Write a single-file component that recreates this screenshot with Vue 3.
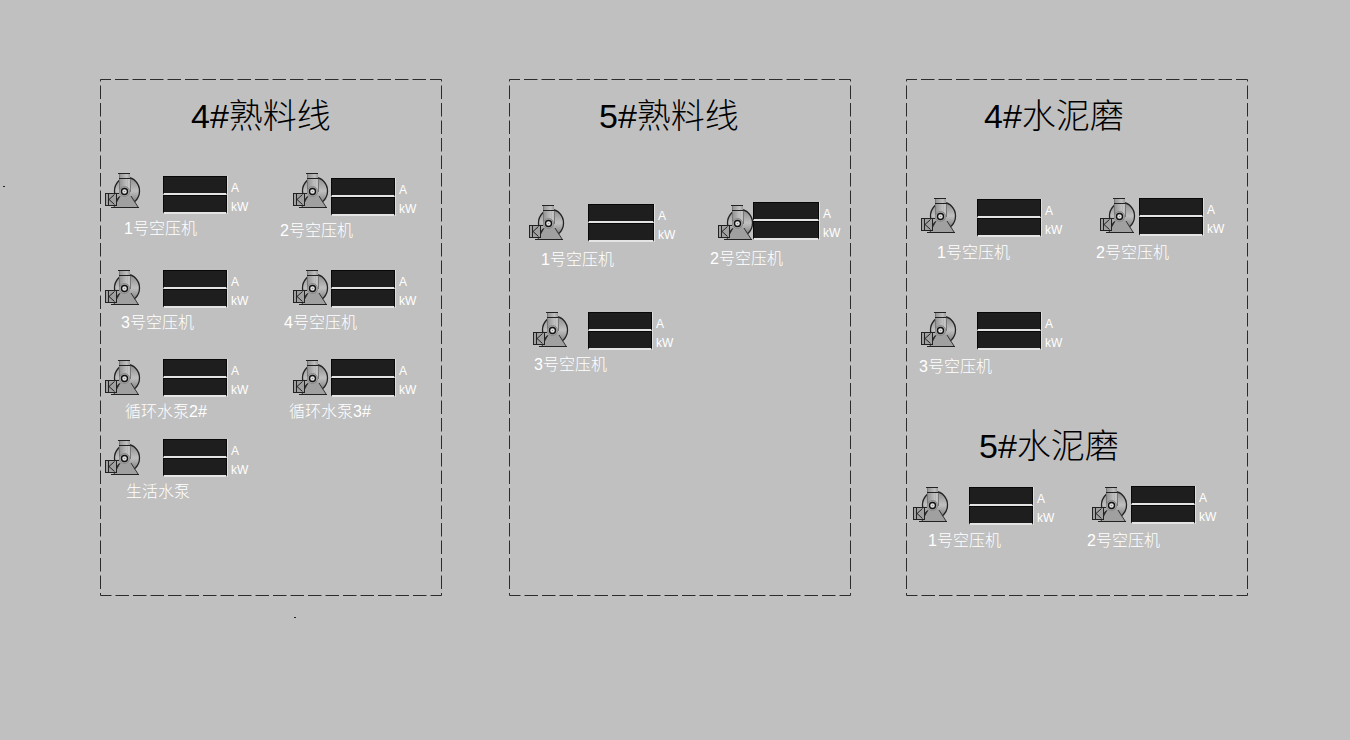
<script setup>
const panels = [
  {
    id: 'clinker4',
    titles: [{ text: '4#熟料线', x: 91, y: 17 }],
    pumps: [
      { name: '1号空压机', x: 4, y: 93, boxX: 63, boxY: 97, w: 64, nameX: 24, nameY: 139 },
      { name: '2号空压机', x: 192, y: 93, boxX: 231, boxY: 99, w: 64, nameX: 180, nameY: 141 },
      { name: '3号空压机', x: 4, y: 190, boxX: 63, boxY: 191, w: 64, nameX: 21, nameY: 233 },
      { name: '4号空压机', x: 192, y: 190, boxX: 231, boxY: 191, w: 64, nameX: 184, nameY: 233 },
      { name: '循环水泵2#', x: 4, y: 280, boxX: 63, boxY: 280, w: 64, nameX: 25, nameY: 322 },
      { name: '循环水泵3#', x: 192, y: 280, boxX: 231, boxY: 280, w: 64, nameX: 189, nameY: 322 },
      { name: '生活水泵', x: 4, y: 360, boxX: 63, boxY: 360, w: 64, nameX: 26, nameY: 402 },
    ],
  },
  {
    id: 'clinker5',
    titles: [{ text: '5#熟料线', x: 90, y: 17 }],
    pumps: [
      { name: '1号空压机', x: 19, y: 125, boxX: 79, boxY: 125, w: 66, nameX: 32, nameY: 170 },
      { name: '2号空压机', x: 208, y: 125, boxX: 244, boxY: 123, w: 66, nameX: 201, nameY: 169 },
      { name: '3号空压机', x: 23, y: 232, boxX: 79, boxY: 233, w: 64, nameX: 25, nameY: 275 },
    ],
  },
  {
    id: 'mills',
    titles: [
      { text: '4#水泥磨', x: 78, y: 17 },
      { text: '5#水泥磨', x: 73, y: 347 },
    ],
    pumps: [
      { name: '1号空压机', x: 14, y: 118, boxX: 71, boxY: 120, w: 64, nameX: 31, nameY: 163 },
      { name: '2号空压机', x: 193, y: 118, boxX: 233, boxY: 119, w: 64, nameX: 190, nameY: 163 },
      { name: '3号空压机', x: 14, y: 232, boxX: 71, boxY: 233, w: 64, nameX: 13, nameY: 277 },
      { name: '1号空压机', x: 6, y: 407, boxX: 63, boxY: 408, w: 64, nameX: 22, nameY: 451 },
      { name: '2号空压机', x: 185, y: 407, boxX: 225, boxY: 407, w: 64, nameX: 181, nameY: 451 },
    ],
  },
]
const at = (x, y) => ({ left: x + 'px', top: y + 'px' })
</script>

<template>
  <main class="screen">
    <svg width="0" height="0" class="defs" aria-hidden="true">
      <defs>
        <linearGradient id="housing" x1="0" y1="0" x2="0" y2="1">
          <stop offset="0" stop-color="#8c8c8c" />
          <stop offset="0.5" stop-color="#c0c0c0" />
          <stop offset="1" stop-color="#747474" />
        </linearGradient>
        <linearGradient id="duct" x1="0" y1="0" x2="1" y2="0">
          <stop offset="0" stop-color="#909090" />
          <stop offset="0.7" stop-color="#c0c0c0" />
          <stop offset="1" stop-color="#9a9a9a" />
        </linearGradient>
        <symbol id="pump" viewBox="0 0 37 37">
          <ellipse cx="23" cy="19" rx="12.500" ry="13.500" fill="url(#housing)" stroke="#222" stroke-width="1.300" />
          <path d="M15 1.500H26V20A5 5 0 0 1 15 20Z" fill="url(#duct)" />
          <path d="M15.500 2V18M26.500 7V20" fill="none" stroke="#777" />
          <path d="M25 7V20" stroke="#ddd" />
          <path d="M14 1.500H26M15 6.500H26" fill="none" stroke="#222" />
          <path d="M16 23 10 35H34L25 23Z" fill="#a0a0a0" />
          <path d="M16 24 10 35M27 24 34 35" fill="none" stroke="#333" />
          <path d="M7 35.500H35" fill="none" stroke="#222" />
          <rect x="1.500" y="21.500" width="11" height="12" fill="#a0a0a0" stroke="#222" />
          <path d="M4.500 22V33M10.500 22.500 5 27.500 10.500 32.500M12 21.500H15M13 28 15 25" fill="none" stroke="#222" />
          <circle cx="20.500" cy="19.500" r="5" fill="#aaa" stroke="#888" />
          <circle cx="20.500" cy="19.500" r="3" fill="#e4e4e4" stroke="#111" stroke-width="1.400" />
          <circle cx="20.500" cy="19.500" r="0.800" fill="#999" />
        </symbol>
      </defs>
    </svg>
    <span class="speck speck-left"></span>
    <span class="speck speck-bottom"></span>
    <div class="panels">
      <section v-for="panel in panels" :key="panel.id" class="panel">
        <svg class="outline" aria-hidden="true">
          <rect x="0.500" y="0.500" />
        </svg>
        <h2 v-for="t in panel.titles" :key="t.text" class="title" :style="at(t.x, t.y)">{{ t.text }}</h2>
        <template v-for="(p, i) in panel.pumps" :key="i">
          <svg class="pump" :style="at(p.x, p.y)" aria-hidden="true"><use href="#pump" /></svg>
          <div class="meter" :style="at(p.boxX, p.boxY)">
            <div class="row"><span class="value" :style="{ width: p.w + 'px' }"></span><span class="unit">A</span></div>
            <div class="row"><span class="value" :style="{ width: p.w + 'px' }"></span><span class="unit">kW</span></div>
          </div>
          <span class="name" :style="at(p.nameX, p.nameY)">{{ p.name }}</span>
        </template>
      </section>
    </div>
  </main>
</template>

<style>
body {
  background: #c0c0c0;
}
</style>

<style scoped>
.screen {
  position: relative;
  box-sizing: border-box;
  min-height: 100vh;
  padding: 79px 102px 0 100px;
  background: #c0c0c0;
  font-family: "Liberation Sans", "Noto Sans CJK SC", sans-serif;
}
.defs {
  position: absolute;
}
.panels {
  display: flex;
}
.panel {
  position: relative;
  flex: 1 1 0;
  min-height: 517px;
}
.panel:nth-child(2) {
  margin: 0 55px 0 67px;
}
.outline {
  position: absolute;
  inset: 0;
  width: 100%;
  height: 100%;
}
.outline rect {
  width: calc(100% - 1px);
  height: calc(100% - 1px);
  fill: none;
  stroke: #2c2c2c;
  stroke-dasharray: 13.5 4;
  stroke-dashoffset: 3;
}
.title {
  position: absolute;
  margin: 0;
  font-size: 34px;
  font-weight: 300;
  line-height: 40px;
  white-space: nowrap;
  color: #000;
}
.pump {
  position: absolute;
  width: 37px;
  height: 37px;
}
.meter {
  position: absolute;
  display: flex;
  flex-direction: column;
}
.row {
  display: flex;
  align-items: center;
  gap: 4px;
  height: 19px;
}
.value {
  box-sizing: border-box;
  height: 19px;
  background: #1e1e1e;
  border: 1px solid #080808;
  border-bottom: 2px solid #e4e4e4;
  box-shadow: 1px 0 #ddd;
}
.unit {
  padding-top: 5px;
  font-size: 12px;
  line-height: 16px;
  color: #fff;
}
.name {
  position: absolute;
  font-size: 16px;
  font-weight: 300;
  line-height: 22px;
  white-space: nowrap;
  color: #fff;
}
.speck {
  position: absolute;
  width: 2px;
  height: 1px;
  background: #222;
}
.speck-left {
  left: 3px;
  top: 186px;
}
.speck-bottom {
  left: 294px;
  top: 617px;
}
</style>
